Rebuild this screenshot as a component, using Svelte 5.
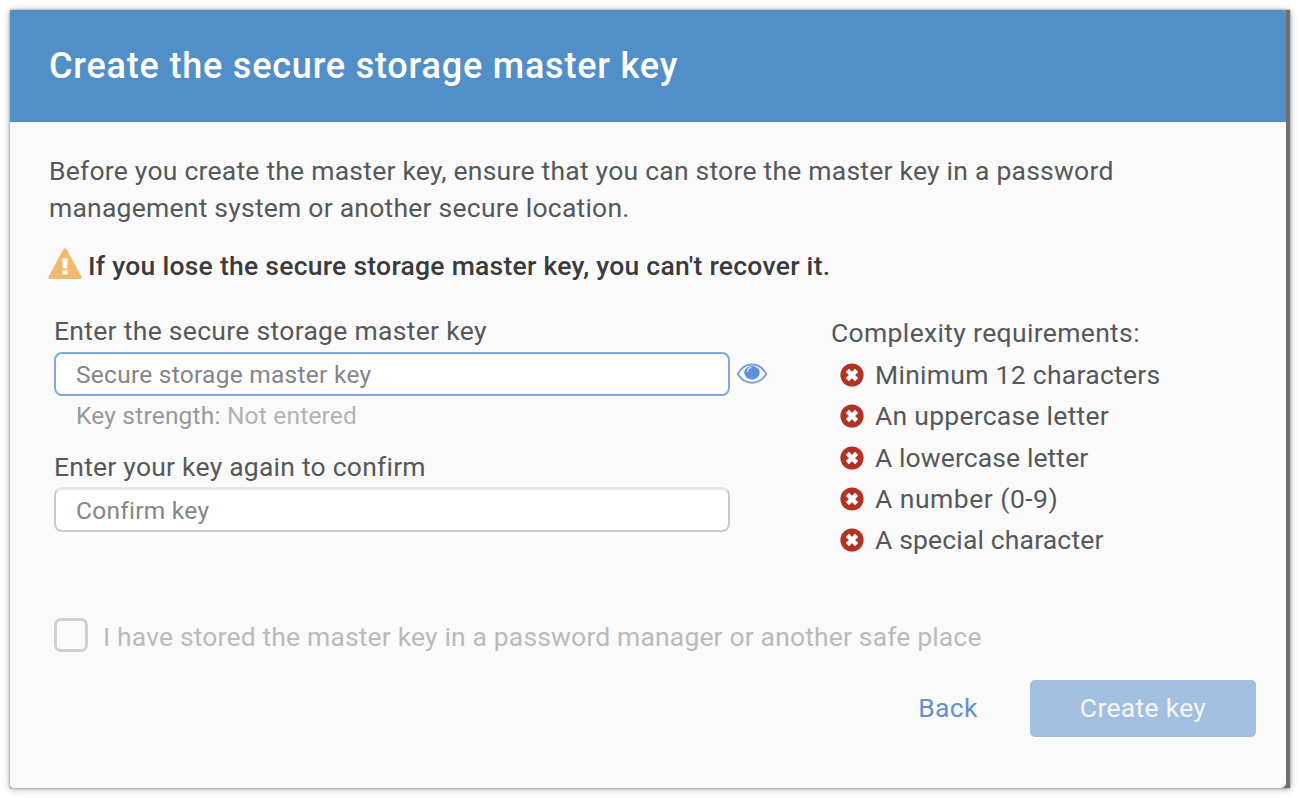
<script>
  const requirements = [
    { text: 'Minimum 12 characters', tracking: 0.28 },
    { text: 'An uppercase letter', tracking: 0.26 },
    { text: 'A lowercase letter', tracking: 0.1 },
    { text: 'A number (0-9)', tracking: 0.5 },
    { text: 'A special character', tracking: 0.16 }
  ];
</script>

<div class="dialog">
  <section class="panel">
    <header><h1>Create the secure storage master key</h1></header>

    <div class="body">
      <p class="intro">
        Before you create the master key, ensure that you can store the master key in a password<br />
        management system or another secure location.
      </p>

      <p class="warning">
        <svg width="34" height="32" viewBox="0 0 34 32" aria-hidden="true">
          <path d="M15.4 1.2Q17 -.7 18.6 1.2L33.4 28.4Q34.2 31 31.6 31H2.4Q-.2 31 .6 28.4Z" fill="#efbb71" />
          <path d="M14.2 10.2h5.6l-.7 10.2h-4.2zM14.4 22.2h5.2v4.4h-5.2z" fill="#fffaf2" />
        </svg>
        <span>If you lose the secure storage master key, you can't recover it.</span>
      </p>

      <div class="columns">
        <div class="fields">
          <label for="key">Enter the secure storage master key</label>
          <div class="row">
            <input id="key" class="active" placeholder="Secure storage master key" />
            <svg width="32" height="24" viewBox="0 0 32 24" aria-hidden="true">
              <path d="M1.8 12C8.5-.6 23.5-.6 30.2 12C23.5 23.6 8.5 23.6 1.8 12Z" fill="#fafafa" stroke="#7f9fe2" stroke-width="1.9" />
              <path d="M9 7.2Q16 .2 23 7.2Q24.8 12 21.6 15.2Q16 19.8 10.4 15.2Q7.2 12 9 7.2Z" fill="#5f8fde" />
              <path d="M11.4 10a4.6 4.6 0 0 1 4.2-4.4" fill="none" stroke="#c3d5f5" stroke-width="1.5" />
            </svg>
          </div>
          <p class="strength">Key strength: <span>Not entered</span></p>
          <label class="second" for="confirm">Enter your key again to confirm</label>
          <input id="confirm" placeholder="Confirm key" />
        </div>

        <div class="rules">
          <h2>Complexity requirements:</h2>
          <ul>
            {#each requirements as r}
              <li>
                <svg width="24" height="24" viewBox="0 0 24 24" aria-hidden="true">
                  <circle cx="12" cy="12" r="11.6" fill="#b23226" />
                  <path d="M7.4 7.4l9.2 9.2M16.6 7.4l-9.2 9.2" stroke="#fff" stroke-width="4.4" />
                </svg>
                <span style="letter-spacing:{r.tracking}px">{r.text}</span>
              </li>
            {/each}
          </ul>
        </div>
      </div>

      <div class="stored">
        <span class="box"></span>
        <span class="statement">I have stored the master key in a password manager or another safe place</span>
      </div>

      <footer>
        <button class="back">Back</button>
        <button class="create">Create key</button>
      </footer>
    </div>
  </section>
</div>

<style>
  :global(body) { background: #fff; overflow: hidden; }
  .dialog {
    box-sizing: border-box;
    width: 1280px;
    height: 778px;
    margin: 10px;
    padding-right: 4px;
    background: #6e706b;
    box-shadow: 0 0 2px rgba(0, 0, 0, 0.4), 0 1px 7px rgba(0, 0, 0, 0.35);
    font: 26.5px/36px Roboto, sans-serif;
    color: #55585b;
  }
  .panel { height: 778px; background: #fafafa; border-radius: 3px 4px 5px 3px; overflow: hidden; }
  h1, h2, p, ul { margin: 0; padding: 0; font-weight: 400; }
  header { height: 112px; background: #528fc9; }
  h1 {
    padding: 34px 0 0 39px;
    font-size: 36px;
    line-height: 44px;
    font-weight: 500;
    letter-spacing: 0.8px;
    color: #fff;
  }
  .body { padding: 30px 30px 0 38px; }
  .intro { padding-left: 1px; line-height: 37px; letter-spacing: 0.23px; white-space: nowrap; }
  .warning {
    display: flex;
    gap: 6px;
    margin-top: 22px;
    font-weight: 500;
    letter-spacing: 0.26px;
    color: #3a3b3d;
    white-space: nowrap;
  }
  .columns { display: flex; gap: 63px; margin: 31px 0 0 6px; }
  .fields { width: 714px; }
  label { display: block; height: 37px; line-height: 32px; letter-spacing: 0.3px; }
  .second { height: 36px; margin-top: 21px; letter-spacing: 0.23px; }
  .row { display: flex; gap: 6px; }
  .row svg { margin-top: 10px; }
  input {
    box-sizing: border-box;
    display: block;
    width: 676px;
    height: 45px;
    padding: 1px 20px 0;
    border: 2px solid #c6c9cd;
    border-top: 3px solid #e5e7e9;
    border-radius: 8px;
    background: #fff;
    outline: none;
    font: 24.5px Roboto, sans-serif;
    letter-spacing: 0.26px;
  }
  input.active { height: 44px; padding-top: 1px; border: 2px solid #7ea9da; }
  input::placeholder { color: #858585; opacity: 1; }
  .strength { height: 30px; margin-top: 4px; padding-left: 22px; font-size: 24.5px; line-height: 31px; letter-spacing: 0.2px; color: #95999f; }
  .strength span { color: #b3b3b3; }
  .rules { padding-top: 1px; white-space: nowrap; }
  h2 { font-size: 26.5px; line-height: 34px; letter-spacing: 0.34px; }
  ul { list-style: none; margin: 4.2px 0 -0.2px 9px; }
  li { display: flex; align-items: center; gap: 11px; height: 41.4px; }
  .stored {
    display: flex;
    align-items: center;
    gap: 15px;
    margin: 55px 0 0 6px;
    letter-spacing: 0.15px;
    color: #bababa;
    white-space: nowrap;
  }
  .statement { padding-top: 3px; }
  .box { box-sizing: border-box; width: 34px; height: 34px; border: 3px solid #d1d1d1; border-radius: 7px; }
  footer { display: flex; justify-content: flex-end; gap: 27px; margin-top: 25px; }
  button { border: 0; padding: 0 0 1px; height: 57px; border-radius: 5px; font: 26.5px Roboto, sans-serif; letter-spacing: 0.3px; }
  .back { width: 110px; background: none; color: #668fce; }
  .create { width: 226px; background: #a2bfdf; color: #f3f7fb; }
</style>
